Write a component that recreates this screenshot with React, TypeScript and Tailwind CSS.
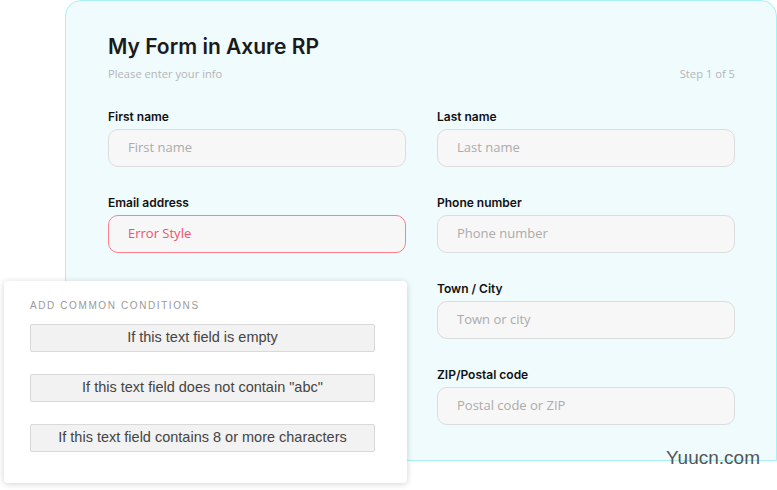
import React from "react";

const fields: { label?: string; placeholder?: string; error?: boolean }[] = [
  { label: "First name", placeholder: "First name" },
  { label: "Last name", placeholder: "Last name" },
  { label: "Email address", placeholder: "Error Style", error: true },
  { label: "Phone number", placeholder: "Phone number" },
  {},
  { label: "Town / City", placeholder: "Town or city" },
  {},
  { label: "ZIP/Postal code", placeholder: "Postal code or ZIP" },
];

const conditions = [
  "If this text field is empty",
  'If this text field does not contain "abc"',
  "If this text field contains 8 or more characters",
];

export default function App() {
  return (
    <div className="relative w-[777px] h-[490px] bg-white overflow-hidden">
      <div className="ml-[65px] w-[712px] h-[461px] rounded-tl-[16px] rounded-tr-[16px] rounded-bl-[4px] border border-[#a8eff6] bg-[#effbfd] pl-[42px] pr-[41px] pt-[32px]">
        <h1
          className="text-[21px] leading-[28px] font-semibold text-[#1a1a1a]"
          style={{ fontFamily: "Inter, 'Noto Sans', sans-serif" }}
        >
          My Form in Axure RP
        </h1>
        <div
          className="mt-[5px] flex justify-between text-[11.2px] leading-[16px] text-[#b5b5b5]"
          style={{ fontFamily: "'Open Sans', sans-serif" }}
        >
          <span>Please enter your info</span>
          <span>Step 1 of 5</span>
        </div>
        <div className="mt-[28px] grid grid-cols-[298px_298px] gap-x-[31px] gap-y-[29px]">
          {fields.map((f, i) =>
            f.label ? (
              <div key={i} className="flex flex-col">
                <div
                  className="text-[12px] leading-[14px] font-semibold text-[#111]"
                  style={{ fontFamily: "Inter, 'Noto Sans', sans-serif" }}
                >
                  {f.label}
                </div>
                <div
                  className={
                    f.error
                      ? "mt-[5px] h-[38px] rounded-[10px] border border-[#ff7d8c] bg-[#f7f7f7] pl-[19px] flex items-center text-[13px] text-[#f2516a]"
                      : "mt-[5px] h-[38px] rounded-[10px] border border-[#dcdcdc] bg-[#f7f7f7] pl-[19px] flex items-center text-[13px] text-[#ababab]"
                  }
                  style={{ fontFamily: "'Open Sans', sans-serif" }}
                >
                  {f.placeholder}
                </div>
              </div>
            ) : (
              <div key={i} className="h-[57px]" />
            )
          )}
        </div>
      </div>

      <div
        className="absolute left-[4px] top-[281px] w-[403px] h-[202px] rounded-[4px] bg-white shadow-[0_1px_6px_rgba(0,0,0,0.18)] pl-[26px] pt-[19px]"
        style={{ fontFamily: "'Liberation Sans', Arial, sans-serif" }}
      >
        <div className="text-[10px] leading-[12px] tracking-[0.16em] text-[#9a9a9a]">ADD COMMON CONDITIONS</div>
        <div className="mt-[12px] flex flex-col gap-[22px]">
          {conditions.map((c) => (
            <div
              key={c}
              className="w-[345px] h-[28px] rounded-[2px] border border-[#d9d9d9] bg-[#f2f2f2] flex items-center justify-center text-[14.5px] text-[#444]"
            >
              {c}
            </div>
          ))}
        </div>
      </div>

      <div
        className="absolute left-[666px] top-[447px] text-[19px] leading-[22px] text-[#555]"
        style={{ fontFamily: "'Liberation Sans', Arial, sans-serif" }}
      >
        Yuucn.com
      </div>
    </div>
  );
}
